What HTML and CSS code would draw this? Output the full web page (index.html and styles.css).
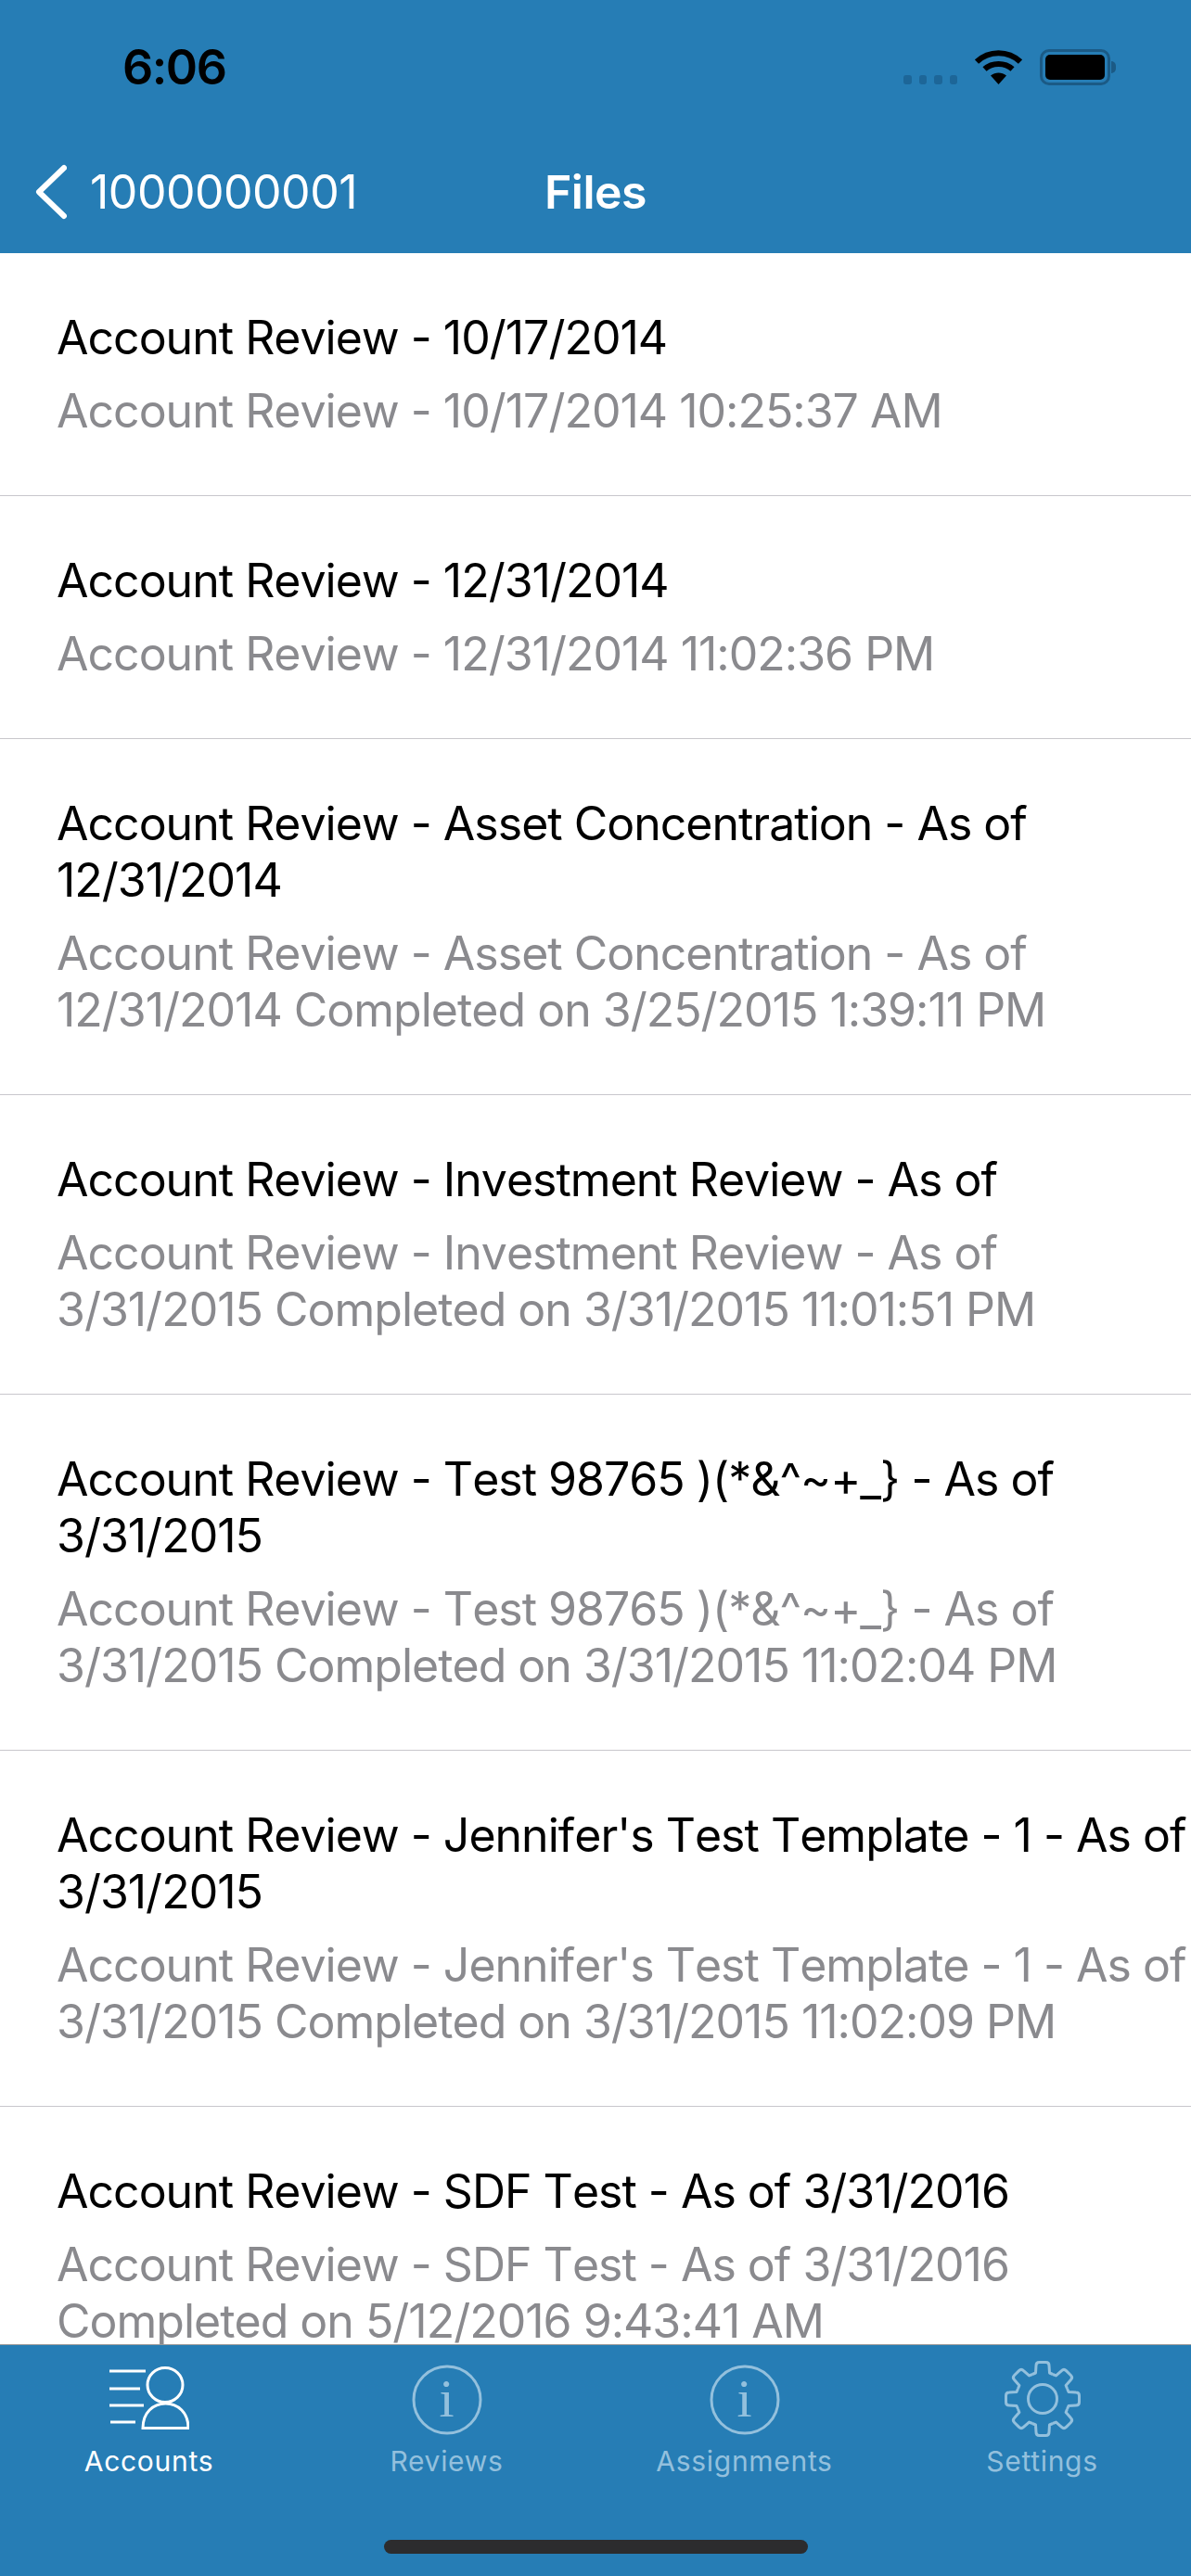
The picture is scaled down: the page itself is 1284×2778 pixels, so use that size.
FILE: index.html
```html
<!DOCTYPE html>
<html lang="en">
<head>
    <meta charset="UTF-8">
    <meta name="viewport" content="width=device-width, initial-scale=1.0">
    <title>Files</title>
    <link rel="stylesheet" href="styles.css">
</head>
<body>
    <div class="phone">
        <div class="status-bar">
            <span class="clock">6:06</span>
            <div class="status-icons">
                <div class="signal"><i></i><i></i><i></i><i></i></div>
                <svg class="wifi" width="51" height="38" viewBox="0 0 51 38">
                    <path d="M2 13.5C15 1 36 1 49 13.5" fill="none" stroke="#000" stroke-width="6"/>
                    <path d="M10.5 21.5C18.5 14 32.5 14 40.5 21.5" fill="none" stroke="#000" stroke-width="6"/>
                    <path d="M25.5 38L17 28.5C22 24.5 29 24.5 34 28.5Z" fill="#000"/>
                </svg>
                <div class="battery"><div class="battery-fill"></div></div>
                <div class="battery-cap"></div>
            </div>
        </div>

        <div class="nav-bar">
            <div class="nav-back">
                <svg width="37" height="60" viewBox="0 0 37 60">
                    <path d="M34 4L7 30L34 56" fill="none" stroke="#fff" stroke-width="6" stroke-linecap="round" stroke-linejoin="round"/>
                </svg>
                <span>1000000001</span>
            </div>
            <div class="nav-title">Files</div>
        </div>

        <div class="file-list">
            <div class="file-row">
                <div class="file-name">Account Review - 10/17/2014</div>
                <div class="file-sub">Account Review - 10/17/2014 10:25:37 AM</div>
            </div>
            <div class="file-row">
                <div class="file-name">Account Review - 12/31/2014</div>
                <div class="file-sub">Account Review - 12/31/2014 11:02:36 PM</div>
            </div>
            <div class="file-row">
                <div class="file-name">Account Review - Asset Concentration - As of<br>12/31/2014</div>
                <div class="file-sub">Account Review - Asset Concentration - As of<br>12/31/2014 Completed on 3/25/2015 1:39:11 PM</div>
            </div>
            <div class="file-row">
                <div class="file-name">Account Review - Investment Review - As of</div>
                <div class="file-sub">Account Review - Investment Review - As of<br>3/31/2015 Completed on 3/31/2015 11:01:51 PM</div>
            </div>
            <div class="file-row">
                <div class="file-name">Account Review - Test 98765 )(*&amp;^~+_} - As of<br>3/31/2015</div>
                <div class="file-sub">Account Review - Test 98765 )(*&amp;^~+_} - As of<br>3/31/2015 Completed on 3/31/2015 11:02:04 PM</div>
            </div>
            <div class="file-row">
                <div class="file-name">Account Review - Jennifer's Test Template - 1 - As of<br>3/31/2015</div>
                <div class="file-sub">Account Review - Jennifer's Test Template - 1 - As of<br>3/31/2015 Completed on 3/31/2015 11:02:09 PM</div>
            </div>
            <div class="file-row">
                <div class="file-name">Account Review - SDF Test - As of 3/31/2016</div>
                <div class="file-sub">Account Review - SDF Test - As of 3/31/2016<br>Completed on 5/12/2016 9:43:41 AM</div>
            </div>
        </div>

        <div class="tab-bar">
            <div class="tab tab-active">
                <svg class="tab-icon" width="86" height="82" viewBox="0 0 86 82">
                    <g fill="none" stroke="#fff" stroke-width="3">
                        <path d="M0 11H39M0 30H33M0 48H37M1 66H28"/>
                        <ellipse cx="60" cy="26" rx="19" ry="18.5"/>
                        <path d="M36 72.5C36 56 47 46 60.5 46C74 46 85 56 85 72.5Z"/>
                    </g>
                </svg>
                <span>Accounts</span>
            </div>
            <div class="tab">
                <svg class="tab-icon" width="78" height="82" viewBox="0 0 78 82">
                    <circle cx="39" cy="42" r="36" fill="none" stroke="#93c0dd" stroke-width="3"/>
                    <text x="39" y="60" text-anchor="middle" class="info-i">i</text>
                </svg>
                <span>Reviews</span>
            </div>
            <div class="tab">
                <svg class="tab-icon" width="78" height="82" viewBox="0 0 78 82">
                    <circle cx="39" cy="42" r="36" fill="none" stroke="#93c0dd" stroke-width="3"/>
                    <text x="39" y="60" text-anchor="middle" class="info-i">i</text>
                </svg>
                <span>Assignments</span>
            </div>
            <div class="tab">
                <svg class="tab-icon" width="82" height="82" viewBox="-41 -41 82 82">
                    <defs>
                        <path id="tooth" d="M-11 -26.5L-7.5 -28L-7 -36Q-7 -39.5 -3.5 -39.5H3.5Q7 -39.5 7 -36L7.5 -28L11 -26.5"/>
                    </defs>
                    <g fill="none" stroke="#93c0dd" stroke-width="3" stroke-linejoin="round">
                        <use href="#tooth"/>
                        <use href="#tooth" transform="rotate(45)"/>
                        <use href="#tooth" transform="rotate(90)"/>
                        <use href="#tooth" transform="rotate(135)"/>
                        <use href="#tooth" transform="rotate(180)"/>
                        <use href="#tooth" transform="rotate(225)"/>
                        <use href="#tooth" transform="rotate(270)"/>
                        <use href="#tooth" transform="rotate(315)"/>
                        <circle r="15.5"/>
                    </g>
                </svg>
                <span>Settings</span>
            </div>
            <div class="home-indicator"></div>
        </div>
    </div>
</body>
</html>
```

FILE: styles.css
```css
body {
    font-family: Inter, "Liberation Sans", sans-serif;
    margin: 0;
    padding: 0;
    background: #fff;
    color: #000;
}
.phone {
    width: 1284px;
    height: 2778px;
    display: flex;
    flex-direction: column;
    overflow: hidden;
}
.status-bar {
    background: #267db5;
    height: 130px;
    box-sizing: border-box;
    padding: 41px 81px 0 132px;
    display: flex;
    justify-content: space-between;
    align-items: flex-start;
}
.clock {
    font-size: 52px;
    font-weight: 600;
    line-height: 64px;
    letter-spacing: -1.5px;
}
.status-icons {
    display: flex;
    align-items: flex-start;
    padding-top: 12px;
}
.signal {
    display: flex;
    gap: 8px;
    margin-top: 28px;
    margin-right: 19px;
}
.signal i {
    width: 8.5px;
    height: 10px;
    border-radius: 3px;
    background: #1d6698;
}
.wifi {
    margin-right: 19px;
}
.battery {
    width: 76px;
    height: 39px;
    box-sizing: border-box;
    border: 3px solid #1b5a85;
    border-radius: 10px;
    padding: 3px;
}
.battery-fill {
    height: 100%;
    background: #000;
    border-radius: 5px;
}
.battery-cap {
    width: 5px;
    height: 13px;
    margin-top: 13px;
    margin-left: 1px;
    background: #1b5a85;
    border-radius: 0 5px 5px 0;
}
.nav-bar {
    background: #267db5;
    height: 143px;
    flex-shrink: 0;
    position: relative;
    color: #fff;
}
.nav-back {
    display: flex;
    align-items: center;
    padding: 41px 0 0 35px;
    gap: 25px;
    font-size: 50px;
    line-height: 72px;
    letter-spacing: -0.5px;
}
.nav-title {
    position: absolute;
    left: 0;
    right: 0;
    top: 41px;
    text-align: center;
    font-size: 50px;
    font-weight: 600;
    line-height: 72px;
    letter-spacing: -0.5px;
}
.file-list {
    flex: 1;
    min-height: 0;
    overflow: hidden;
}
.file-row {
    padding: 61px 0 60px 61px;
    border-bottom: 1px solid #c8c7cc;
}
.file-name {
    font-size: 50px;
    line-height: 61px;
    letter-spacing: -1px;
    font-kerning: none;
    white-space: nowrap;
}
.file-sub {
    font-size: 50px;
    line-height: 61px;
    letter-spacing: -1px;
    font-kerning: none;
    margin-top: 18px;
    color: #8a8a8e;
    white-space: nowrap;
}
.tab-bar {
    background: #267db5;
    border-top: 1px solid #999;
    height: 250px;
    box-sizing: border-box;
    flex-shrink: 0;
    display: grid;
    grid-template-columns: repeat(4, 1fr);
    position: relative;
}
.tab {
    display: flex;
    flex-direction: column;
    align-items: center;
    color: #93c0dd;
    font-size: 30px;
    letter-spacing: 0.7px;
    line-height: 36px;
    padding-top: 17px;
}
.tab-active {
    color: #fff;
}
.tab-icon {
    margin-bottom: 8px;
}
.info-i {
    font-family: "Liberation Serif", serif;
    font-size: 58px;
    fill: #93c0dd;
}
.home-indicator {
    position: absolute;
    left: 414px;
    bottom: 24px;
    width: 457px;
    height: 15px;
    border-radius: 8px;
    background: #2c2c2e;
}
```
